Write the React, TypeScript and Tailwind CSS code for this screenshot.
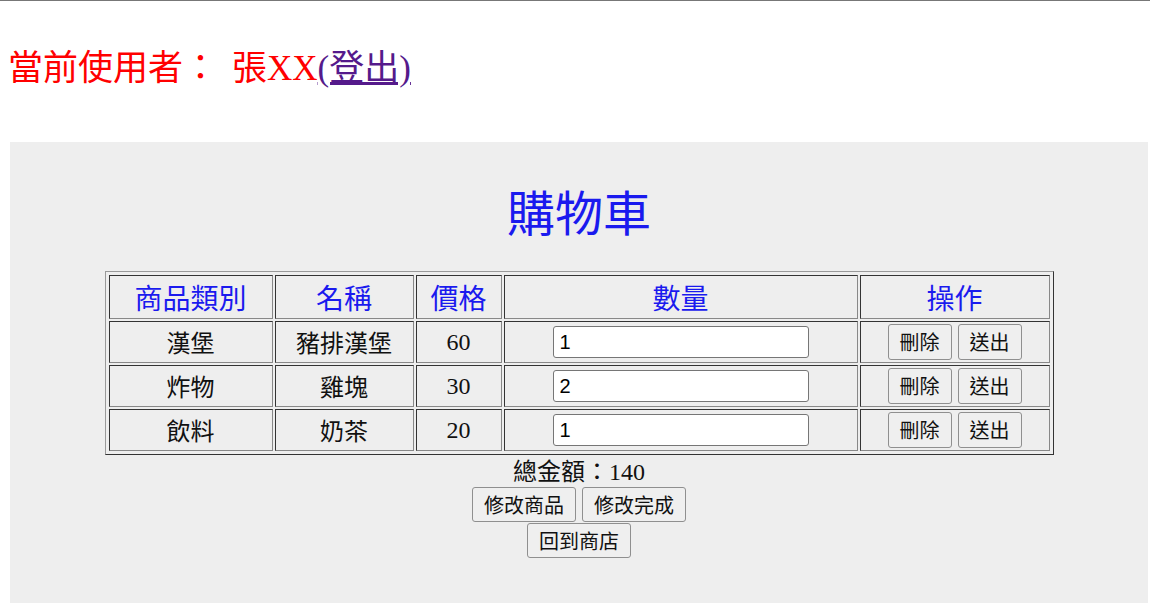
import React from "react"

const serif = { fontFamily: '"Liberation Serif", "Noto Sans CJK TC", serif' }

const rows = [
  { type: "漢堡", name: "豬排漢堡", price: 60, qty: "1" },
  { type: "炸物", name: "雞塊", price: 30, qty: "2" },
  { type: "飲料", name: "奶茶", price: 20, qty: "1" },
]

const cell = "border border-t-[#333] border-l-[#333] border-r-[#888] border-b-[#888] p-0 text-center align-middle"
const btn =
  "inline-flex items-center justify-center rounded-[3px] border border-[#8f8f8f] bg-[#efefef] px-[11px] text-[#111] font-['Noto_Sans_CJK_TC',sans-serif] leading-none"

export default function App() {
  return (
    <div className="min-h-[603px] bg-white border-t border-[#777]" style={serif}>
      <div className="h-[141px] pl-[8px] pt-[42px]">
        <span className="text-[35px] leading-[44px] text-[#ff0000]">
          <span className="font-['Noto_Sans_CJK_TC',sans-serif]">當前使用者：</span>
          <span className="ml-[14px]">張XX</span>
          <a href="#" className="text-[#551a8b] underline">(登出)</a>
        </span>
      </div>

      <div className="ml-[10px] w-[1138px] min-h-[461px] bg-[#eeeeee] pt-[37px]">
        <h1 className="text-center text-[48px] leading-[62px] text-[#1a1aee] font-['Noto_Sans_CJK_TC',sans-serif] font-normal mb-[30px]">
          購物車
        </h1>

        <table
          className="mx-auto border-separate border-spacing-[2px] p-px border border-t-[#999] border-l-[#999] border-r-[#333] border-b-[#333]"
        >
          <thead>
            <tr className="h-[44px]">
              {[
                ["商品類別", "w-[164px]"],
                ["名稱", "w-[139px]"],
                ["價格", "w-[86px]"],
                ["數量", "w-[354px]"],
                ["操作", "w-[190px]"],
              ].map(([h, w]) => (
                <th key={h} className={`${cell} ${w} text-[28px] font-normal text-[#1a1aee] font-['Noto_Sans_CJK_TC',sans-serif] leading-none`}>
                  {h}
                </th>
              ))}
            </tr>
          </thead>
          <tbody>
            {rows.map(r => (
              <tr key={r.name} className="h-[42px]">
                <td className={`${cell} text-[24px] text-[#111] font-['Noto_Sans_CJK_TC',sans-serif] leading-none`}>{r.type}</td>
                <td className={`${cell} text-[24px] text-[#111] font-['Noto_Sans_CJK_TC',sans-serif] leading-none`}>{r.name}</td>
                <td className={`${cell} text-[24px] text-[#111] leading-none`}>{r.price}</td>
                <td className={cell}>
                  <input
                    defaultValue={r.qty}
                    className="block mx-auto w-[256px] h-[32px] rounded-[3px] border border-[#767676] bg-white px-[6px] text-[20px] text-black font-['Liberation_Sans',sans-serif] outline-none"
                  />
                </td>
                <td className={cell}>
                  <div className="flex justify-center gap-[6px]">
                    <button className={`${btn} h-[36px] text-[20px]`}>刪除</button>
                    <button className={`${btn} h-[36px] text-[20px]`}>送出</button>
                  </div>
                </td>
              </tr>
            ))}
          </tbody>
        </table>

        <div className="text-center text-[24px] leading-[30px] text-[#111]">
          <span className="font-['Noto_Sans_CJK_TC',sans-serif]">總金額：</span>140
        </div>
        <div className="flex justify-center gap-[6px]">
          <button className={`${btn} h-[35px] text-[20px]`}>修改商品</button>
          <button className={`${btn} h-[35px] text-[20px]`}>修改完成</button>
        </div>
        <div className="flex justify-center mt-px">
          <button className={`${btn} h-[35px] text-[20px]`}>回到商店</button>
        </div>
      </div>
    </div>
  )
}
